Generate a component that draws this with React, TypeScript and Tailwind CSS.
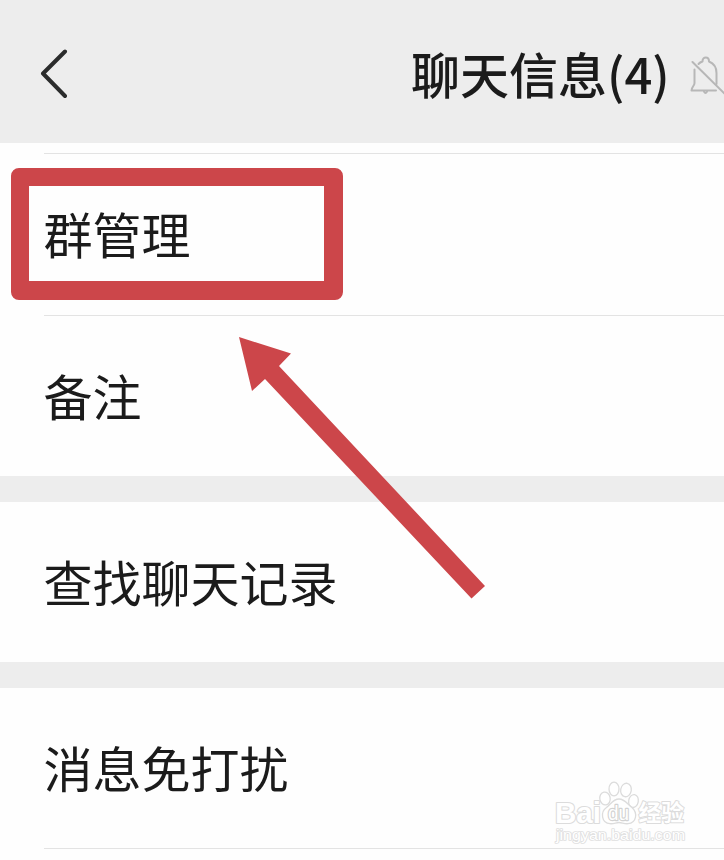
function BackIcon() {
  return (
    <svg width="30" height="52" viewBox="0 0 30 52" fill="none">
      <path d="M27 4 L5 26 L27 48.5" transform="translate(0 -1.5)"
        stroke="#2b2c2c" strokeWidth="4" strokeLinecap="round" strokeLinejoin="round" />
    </svg>
  )
}

function MutedBellIcon() {
  return (
    <svg width="38" height="46" viewBox="0 0 38 46" fill="none"
      stroke="#b7b7b7" strokeWidth="2" strokeLinecap="round" strokeLinejoin="round">
      <path d="M6.5 14.5 V28 C6.5 31 4 31 3.5 35.5 H28" />
      <path d="M10.5 9 C11.5 7.8 12.8 7 14.5 6.5 C14.5 1.2 21 1.2 21 6.5 C26 8.5 28.5 12.5 28.5 18 V29" />
      <path d="M16 36.5 Q17.5 39.5 19 36.5" />
      <path d="M4.5 7 L38 40" />
    </svg>
  )
}

function Row({ label }: { label: string }) {
  return (
    <div className="flex h-40 items-center pb-[3px] pl-[43.5px]">
      <span className="text-[49px] leading-none">{label}</span>
    </div>
  )
}

function Divider() {
  return <div className="ml-[44px] h-px bg-[#e3e3e3]" />
}

function Gap() {
  return <div className="h-[26px] bg-[#ededed]" />
}

function Arrow() {
  return (
    <svg className="absolute left-[230px] top-[330px]" width="264" height="276" viewBox="230 330 264 276">
      <polygon points="239,337 291,353.5 279,366 485,586 471.5,598.5 265,379 252,391" fill="#cc464a" />
    </svg>
  )
}

function Watermark() {
  return (
    <svg className="absolute left-[550px] top-[776px]" width="144" height="72" viewBox="550 776 144 72"
      fill="#ffffff" stroke="#dcdcdc" strokeWidth="1.3" strokeLinejoin="round">
      <text x="555" y="823" fontSize="30" fontWeight="700" textLength="46" lengthAdjust="spacingAndGlyphs"
        className="font-['Liberation_Sans',sans-serif]" paintOrder="stroke" strokeWidth="2.2">Bai</text>
      <ellipse cx="605" cy="798.5" rx="5.2" ry="6.5" transform="rotate(-10 605 798.5)" />
      <ellipse cx="614" cy="789" rx="5" ry="6.8" />
      <ellipse cx="626" cy="790" rx="5.3" ry="6.8" transform="rotate(10 626 790)" />
      <ellipse cx="633.5" cy="801" rx="4.8" ry="6.5" transform="rotate(10 633.5 801)" />
      <path d="M619 799 C613 799 611 804 606.5 807.5 C600 812 601.5 823 610 823.7 C614 824 616 822.5 619 822.5 C622 822.5 624 824 628 823.7 C636.5 823 638 813 632 807.5 C627 804 625 799 619 799 Z" />
      <text x="608" y="820" fontSize="20" textLength="21" lengthAdjust="spacingAndGlyphs"
        className="font-['Liberation_Sans',sans-serif]" paintOrder="stroke" stroke="#d2d2d2" strokeWidth="2.4">du</text>
      <text x="638.5" y="821" fontSize="23" fontWeight="700" textLength="45.5" lengthAdjust="spacingAndGlyphs"
        className="font-['Noto_Sans_CJK_SC',sans-serif]" paintOrder="stroke" strokeWidth="2">经验</text>
      <text x="556" y="840" fontSize="14.5" textLength="129" lengthAdjust="spacingAndGlyphs"
        className="font-['Liberation_Sans',sans-serif]" paintOrder="stroke" stroke="#e0e0e0" strokeWidth="1.7">jingyan.baidu.com</text>
    </svg>
  )
}

export default function App() {
  return (
    <div className="relative h-[860px] w-[724px] overflow-hidden bg-[#fefefe] font-['Noto_Sans_CJK_SC',sans-serif] text-[#1b1b1b]">
      <header className="flex h-[143px] items-center bg-[#ededed] pb-[2px] pl-[38px]">
        <div className="mt-[8px] flex w-[373px] shrink-0">
          <BackIcon />
        </div>
        <h1 className="mt-[4px] w-[277px] shrink-0 whitespace-nowrap text-[49px] font-medium leading-none">聊天信息(4)</h1>
        <div className="mt-[14px] shrink-0">
          <MutedBellIcon />
        </div>
      </header>

      <main>
        <div className="h-[10px]" />
        <Divider />
        <Row label="群管理" />
        <div className="h-px" />
        <Divider />
        <Row label="备注" />
        <Gap />
        <Row label="查找聊天记录" />
        <Gap />
        <Row label="消息免打扰" />
        <Divider />
      </main>

      {/* highlight around the first row */}
      <div className="absolute left-[10.5px] top-[168px] h-[132px] w-[332px] rounded-[8px] border-[18.5px] border-b-[19px] border-r-[19px] border-[#cc464a]" />
      <Arrow />
      <Watermark />
    </div>
  )
}
